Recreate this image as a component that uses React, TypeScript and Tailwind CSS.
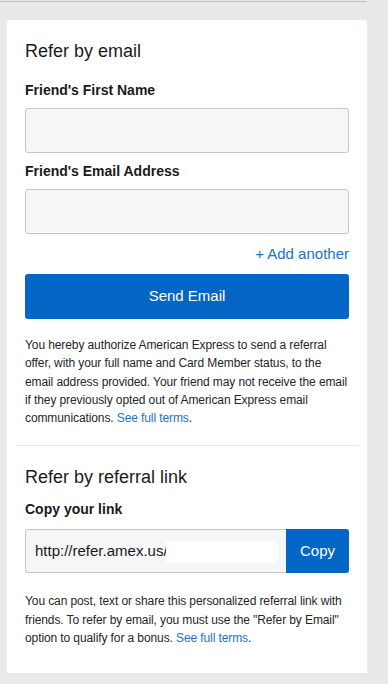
export default function App() {
  return (
    <div className="w-[388px] min-h-[684px] bg-[#e8e9eb] pt-px font-['Liberation_Sans',Arial,sans-serif] text-[#1a1a1a]">
      <div className="h-px w-[367px] bg-[#bcbcbc]" />
      <div className="ml-[7px] mt-[18px] w-[360px] rounded-t-[3px] bg-white pb-[26px] pt-[19px]">
        <div className="px-[18px]">
          <h2 className="text-[18px] leading-[24px] font-normal">Refer by email</h2>
          <label className="mt-[17px] block text-[14px] font-bold leading-[20px]">Friend's First Name</label>
          <div className="mt-[8px] h-[45px] rounded-[3px] border border-[#c6c7c9] bg-[#f5f6f7]" />
          <label className="mt-[8px] block text-[14px] font-bold leading-[20px]">Friend's Email Address</label>
          <div className="mt-[8px] h-[45px] rounded-[3px] border border-[#c6c7c9] bg-[#f5f6f7]" />
          <div className="mt-[10px] flex justify-end">
            <span className="text-[15px] leading-[20px] text-[#1b72cc]">+ Add another</span>
          </div>
          <button className="mt-[10px] flex h-[45px] w-full items-center justify-center rounded-[3px] bg-[#0366c6] text-[15px] text-white">
            Send Email
          </button>
          <p className="mt-[17px] whitespace-nowrap text-[12px] leading-[18.3px] tracking-[-0.1px] text-[#262626]">
            You hereby authorize American Express to send a referral
            <br />
            offer, with your full name and Card Member status, to the
            <br />
            email address provided. Your friend may not receive the email
            <br />
            if they previously opted out of American Express email
            <br />
            communications. <span className="text-[#1b72cc]">See full terms</span>.
          </p>
        </div>
        <div className="mx-[9px] mt-[18px] h-px bg-[#e6e6e6]" />
        <div className="px-[18px]">
          <h2 className="mt-[19px] text-[18px] leading-[24px] font-normal">Refer by referral link</h2>
          <label className="mt-[10px] block text-[14px] font-bold leading-[20px]">Copy your link</label>
          <div className="mt-[10px] flex h-[44px]">
            <div className="flex flex-1 items-center rounded-l-[3px] border border-r-0 border-[#c6c7c9] bg-[#f5f6f7] pl-[9px] text-[15px]">
              <span>http://refer.amex.us/</span>
              <div className="ml-[-2px] mt-[2px] h-[22px] w-[112px] rounded-[3px] bg-white" />
            </div>
            <button className="flex w-[63px] items-center justify-center rounded-r-[3px] bg-[#0366c6] text-[15px] text-white">
              Copy
            </button>
          </div>
          <p className="mt-[19px] whitespace-nowrap text-[12px] leading-[18.3px] tracking-[-0.1px] text-[#262626]">
            You can post, text or share this personalized referral link with
            <br />
            friends. To refer by email, you must use the "Refer by Email"
            <br />
            option to qualify for a bonus. <span className="text-[#1b72cc]">See full terms</span>.
          </p>
        </div>
      </div>
    </div>
  );
}
